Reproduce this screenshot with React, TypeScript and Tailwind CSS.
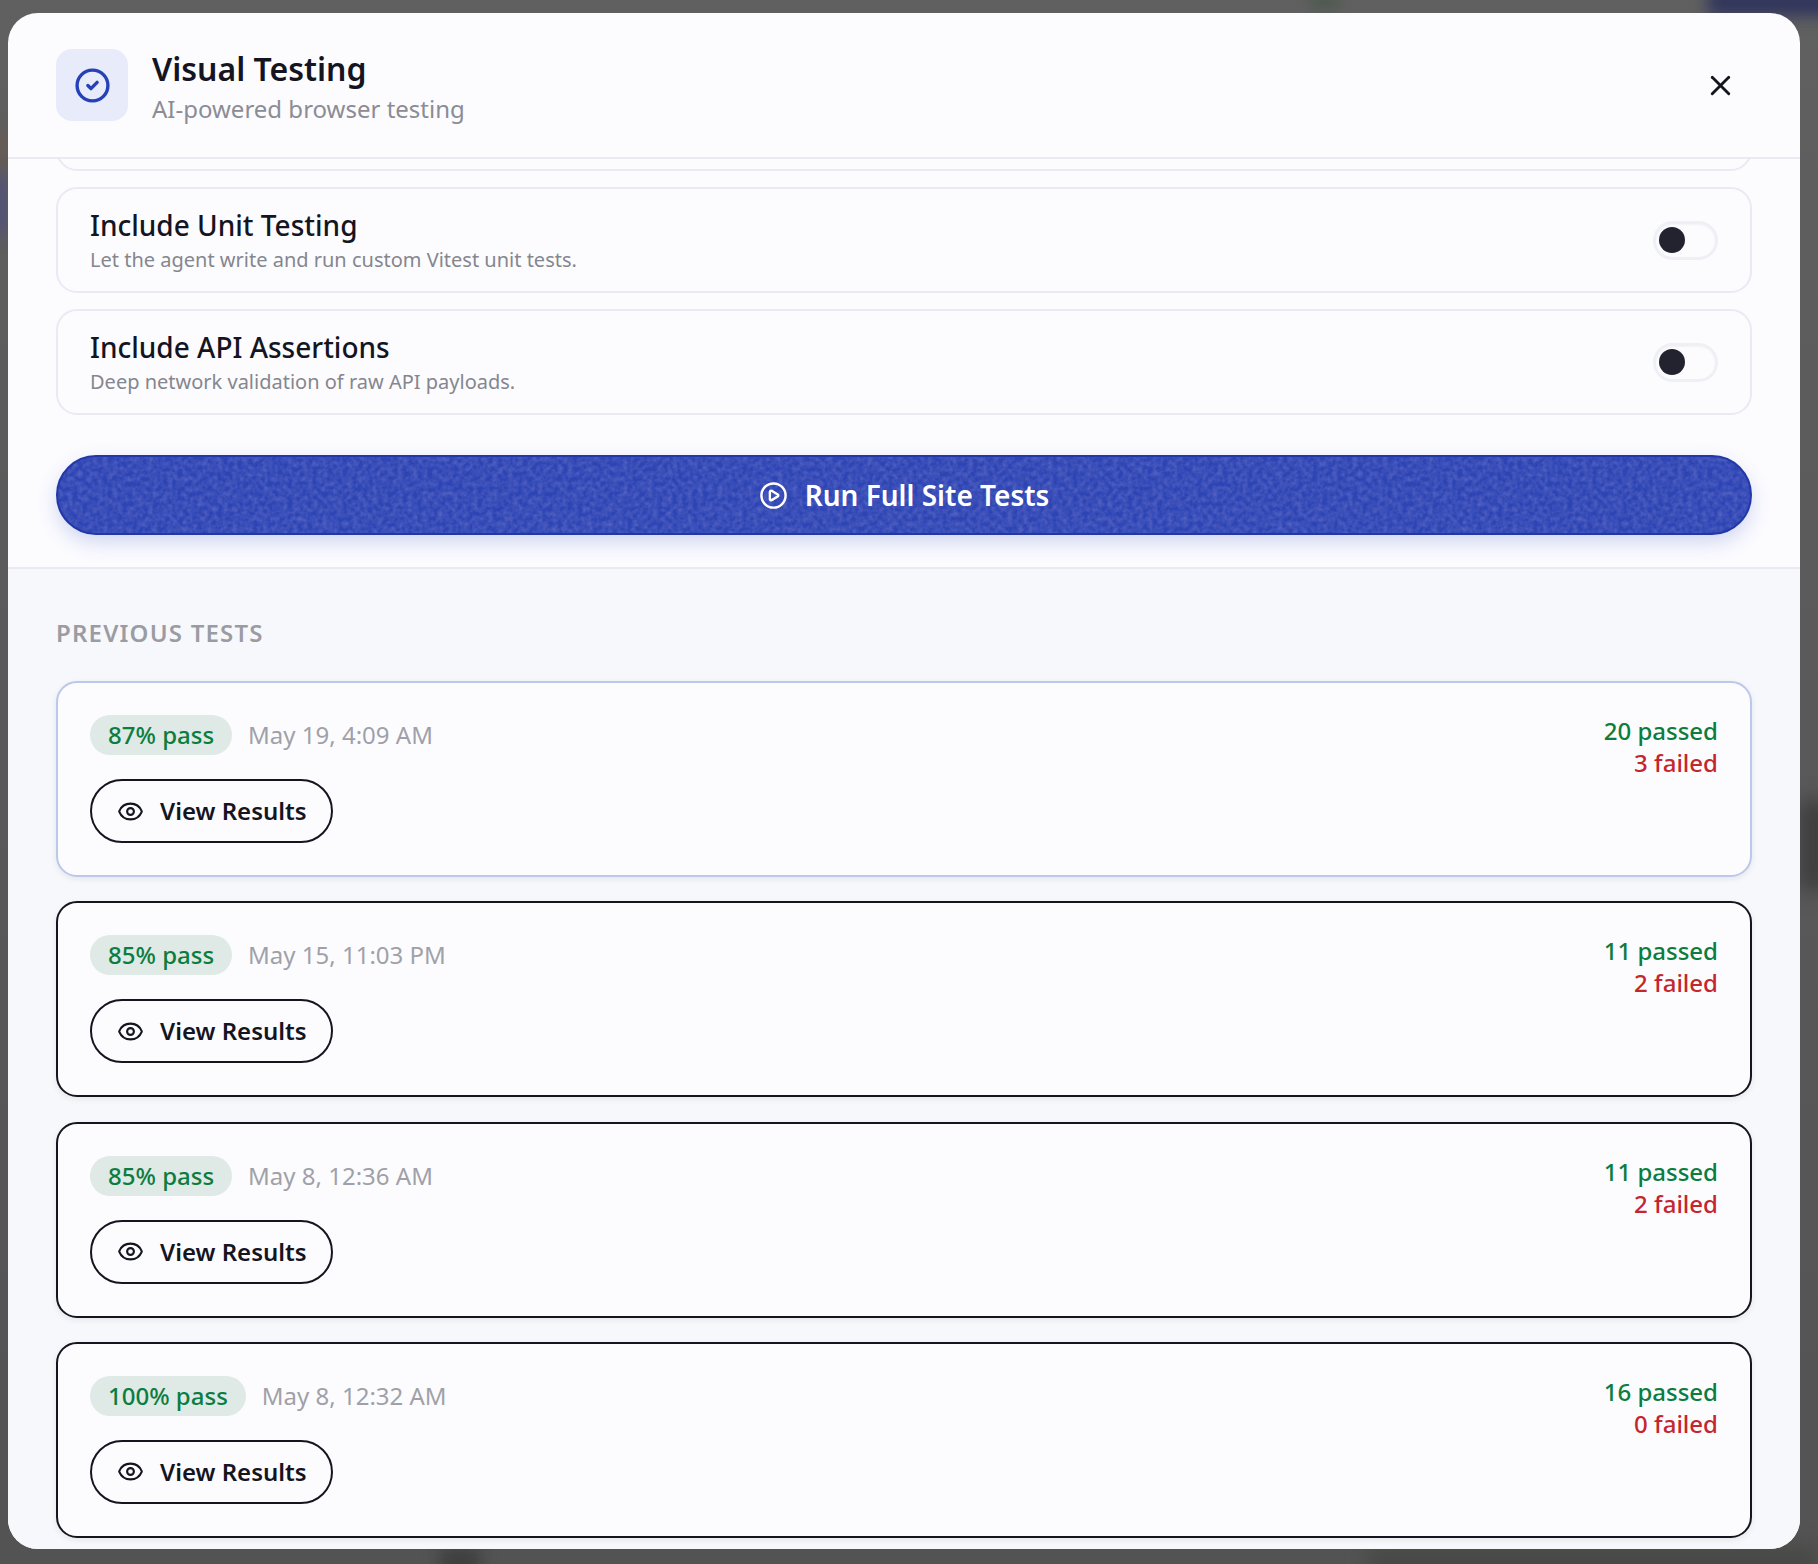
import { CircleCheck, CirclePlay, Eye, X } from "lucide-react";

const font = { fontFamily: '"Noto Sans", sans-serif' };

function Noise({ id, opacity }: { id: string; opacity: string }) {
  return (
    <svg className={"pointer-events-none absolute inset-0 h-full w-full " + opacity} aria-hidden="true">
      <filter id={id}>
        <feTurbulence type="fractalNoise" baseFrequency="0.2" numOctaves={2} seed={4} />
        <feColorMatrix values="0 0 0 0 0.40  0 0 0 0 0.36  0 0 0 0 0.76  1.8 0 0 0 -0.55" />
      </filter>
      <rect width="100%" height="100%" filter={`url(#${id})`} />
    </svg>
  );
}

function OptionRow({ title, desc }: { title: string; desc: string }) {
  return (
    <div className="flex h-[106px] items-center justify-between rounded-[21px] border-2 border-[#e9eaf4] pl-[32px] pr-[32px]">
      <div className="flex flex-col pt-[3px]">
        <div className="text-[28px] leading-[36px] font-medium text-[#14151f]">{title}</div>
        <div className="text-[20px] leading-[33px] text-[#85868e]">{desc}</div>
      </div>
      <div className="flex h-[39px] w-[65px] items-center rounded-full border-[3px] border-[#eff0f6] pl-[3px] shadow-[inset_0_1px_2px_rgba(20,21,31,0.04)]">
        <div className="h-[26px] w-[26px] rounded-full bg-[#22232f]" />
      </div>
    </div>
  );
}

function TestCard({ pct, date, passed, failed, active }: { pct: string; date: string; passed: number; failed: number; active?: boolean }) {
  return (
    <div
      className={
        "flex h-[196px] items-start justify-between rounded-[21px] border-2 bg-[#fcfcff] pl-[32px] pr-[32px] pt-[32px] shadow-[0_2px_6px_rgba(20,21,31,0.08)] " +
        (active ? "border-[#bcc7ec]" : "border-[#14151f]")
      }
    >
      <div className="flex flex-col items-start">
        <div className="flex items-center gap-[16px]">
          <span className="flex h-[40px] items-center rounded-full bg-[#dfe9e6] px-[18px] text-[24px] font-medium text-[#0b7d3e]">{pct}</span>
          <span className="text-[24px] text-[#a0a1a8]">{date}</span>
        </div>
        <button className="mt-[24px] flex h-[64px] w-[243px] items-center rounded-full border-2 border-[#14151f] pl-[25px] text-[24px] font-semibold text-[#14151f]">
          <Eye size={27} strokeWidth={1.9} className="mr-[16px]" />
          View Results
        </button>
      </div>
      <div className="flex flex-col items-end text-[24px] leading-[32px] font-medium">
        <span className="text-[#0b7d3e]">{passed} passed</span>
        <span className="text-[#c4262e]">{failed} failed</span>
      </div>
    </div>
  );
}

export default function App() {
  return (
    <div
      style={font}
      className="relative h-[1564px] w-[1818px] overflow-hidden bg-[linear-gradient(180deg,#606060_0%,#5a5a5a_40%,#535353_100%)] pt-[13px] pl-[8px]"
    >
      <div className="absolute top-[-12px] right-[-20px] h-[28px] w-[130px] bg-[#30355c] blur-[8px]" />
      <div className="absolute top-[-6px] left-[1310px] h-[16px] w-[30px] bg-[#4f5a50] blur-[6px]" />
      <div className="absolute top-[130px] left-[-12px] h-[40px] w-[20px] bg-[#675a52] blur-[8px]" />
      <div className="absolute top-[175px] left-[-12px] h-[60px] w-[20px] bg-[#50507a] blur-[8px]" />
      <div className="absolute top-[800px] right-[-14px] h-[90px] w-[34px] bg-[#3e3e3e] blur-[10px]" />
      <div className="absolute right-[0px] bottom-[-10px] h-[26px] w-[450px] bg-[#474745] blur-[10px]" />
      <div className="absolute bottom-[-10px] left-[440px] h-[26px] w-[40px] bg-[#3e3e3e] blur-[8px]" />
      <div className="relative flex h-[1536px] w-[1792px] flex-col overflow-hidden rounded-[30px] bg-[#fcfcff]">
        <header className="flex h-[146px] shrink-0 items-center justify-between border-b-2 border-[#e9eaf4] pl-[48px] pr-[63px]">
          <div className="flex items-center gap-[24px]">
            <div className="flex h-[72px] w-[72px] items-center justify-center rounded-[16px] bg-[#e8ebf9]">
              <CircleCheck size={37} strokeWidth={2.2} className="text-[#2541b8]" />
            </div>
            <div className="flex flex-col pt-[3px]">
              <div className="text-[32px] leading-[44px] font-semibold text-[#14151f]">Visual Testing</div>
              <div className="text-[24px] leading-[36px] text-[#8b8c94]">AI-powered browser testing</div>
            </div>
          </div>
          <X size={33} strokeWidth={2.1} className="text-[#14151f]" />
        </header>

        <section className="flex h-[410px] shrink-0 flex-col overflow-hidden border-b-2 border-[#e9eaf4] px-[48px]">
          <div className="mt-[-41px] h-[53px] shrink-0 rounded-[21px] border-2 border-[#e9eaf4]" />
          <div className="mt-[16px] flex flex-col gap-[16px]">
            <OptionRow title="Include Unit Testing" desc="Let the agent write and run custom Vitest unit tests." />
            <OptionRow title="Include API Assertions" desc="Deep network validation of raw API payloads." />
          </div>
          <div className="mt-[40px] shrink-0 pb-[40px]">
            <button className="relative flex h-[80px] w-full items-center justify-center gap-[17px] overflow-hidden rounded-full border-2 border-[#2238a8] bg-[#2d45b4] text-[28px] font-semibold text-white shadow-[0_8px_20px_rgba(47,71,181,0.2)]">
              <Noise id="btn-noise" opacity="opacity-30" />
              <CirclePlay size={29} strokeWidth={2} className="relative" />
              <span className="relative">Run Full Site Tests</span>
            </button>
          </div>
        </section>

        <section className="flex min-h-0 flex-1 flex-col bg-[#f7f8fb] px-[48px] pt-[47px]">
          <h2 className="text-[24px] leading-[34px] font-semibold tracking-[0.05em] text-[#9b9ca3] uppercase">Previous Tests</h2>
          <div className="mt-[31px] flex flex-col gap-[24.3px]">
            <TestCard active pct="87% pass" date="May 19, 4:09 AM" passed={20} failed={3} />
            <TestCard pct="85% pass" date="May 15, 11:03 PM" passed={11} failed={2} />
            <TestCard pct="85% pass" date="May 8, 12:36 AM" passed={11} failed={2} />
            <TestCard pct="100% pass" date="May 8, 12:32 AM" passed={16} failed={0} />
          </div>
        </section>
      </div>
    </div>
  );
}
